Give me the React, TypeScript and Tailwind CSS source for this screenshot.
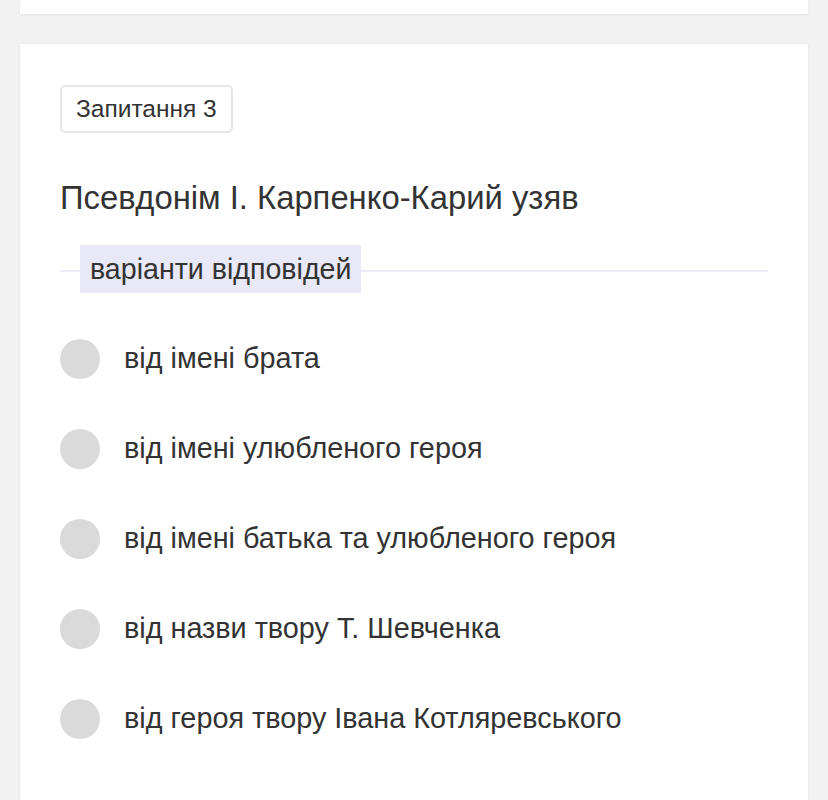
import React from "react";

const options = [
  "від імені брата",
  "від імені улюбленого героя",
  "від імені батька та улюбленого героя",
  "від назви твору Т. Шевченка",
  "від героя твору Івана Котляревського",
];

export default function App() {
  return (
    <div
      className="min-h-[800px] bg-[#f2f2f2] px-5 text-[#333333]"
      style={{ fontFamily: '"Liberation Sans", Arial, sans-serif' }}
    >
      <div className="h-[14px] bg-white shadow-[0_1px_2px_rgba(0,0,0,0.08)]" />
      <div className="mt-[30px] bg-white px-10 pt-[41px] pb-20 shadow-[0_0_2px_rgba(0,0,0,0.08)]">
        <div className="inline-flex h-12 items-center rounded-[5px] border-2 border-[#e6e6e6] px-[14px] text-[24.5px]">
          Запитання 3
        </div>
        <div className="mt-[45px] text-[32.8px] leading-[40px]">
          Псевдонім І. Карпенко-Карий узяв
        </div>
        <div className="relative mt-[27px] h-12">
          <div className="absolute left-0 right-0 top-[25px] h-[2px] bg-[#ebebf5]" />
          <div className="absolute left-[20px] top-0 flex h-12 items-center bg-[#e8e8f6] px-[10px] text-[28.6px]">
            варіанти відповідей
          </div>
        </div>
        <div className="mt-[46px] flex flex-col gap-[50px]">
          {options.map((o) => (
            <div key={o} className="flex h-10 items-center gap-6">
              <div className="h-10 w-10 shrink-0 rounded-full bg-[#dadada]" />
              <div className="text-[28.8px]">{o}</div>
            </div>
          ))}
        </div>
      </div>
    </div>
  );
}
